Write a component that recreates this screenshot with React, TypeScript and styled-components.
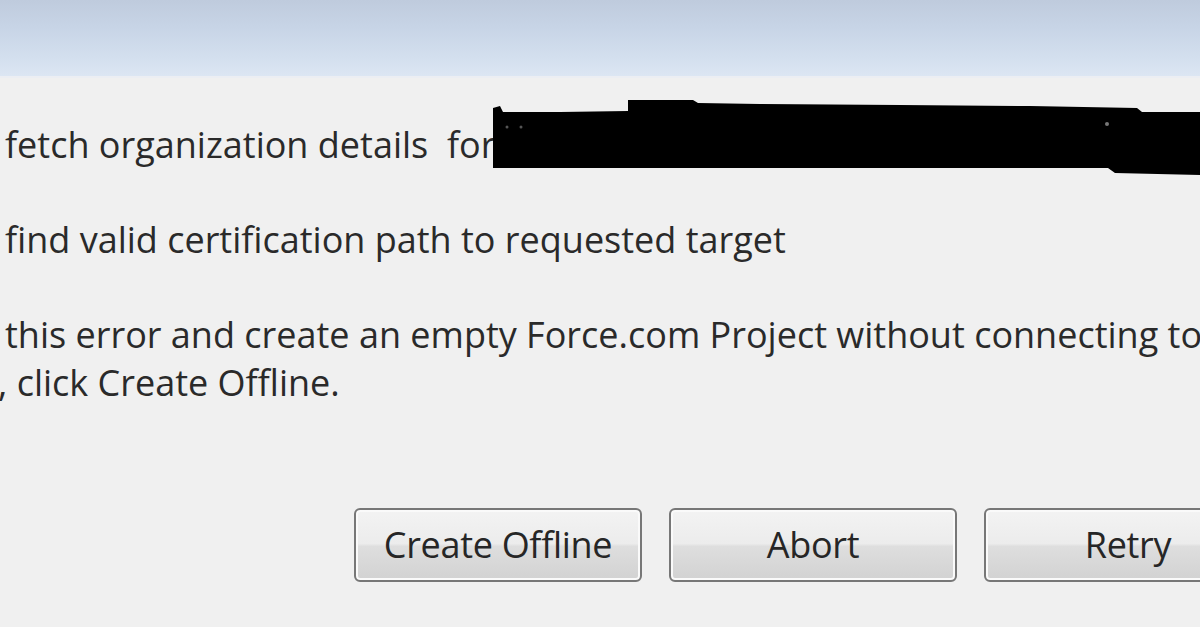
import styled, { createGlobalStyle } from "styled-components";

const GlobalStyle = createGlobalStyle`
  html, body {
    margin: 0;
    padding: 0;
    background: #f0f0f0;
  }
  body {
    font-family: "Open Sans", "Noto Sans", "DejaVu Sans", sans-serif;
  }
`;

const Dialog = styled.div`
  position: relative;
  width: 1200px;
  height: 627px;
  overflow: hidden;
  background: #f0f0f0;
`;

const TitleBar = styled.div`
  height: 76px;
  background: linear-gradient(to bottom, #bfcbdd 0%, #c7d4e6 35%, #d3dfee 75%, #dce6f3 100%);
  border-bottom: 2px solid #eceef3;
`;

const Body = styled.div`
  padding: 43px 0 0 5px;
  color: #2a2a2a;
  font-size: 36px;
  line-height: 47.5px;
  white-space: nowrap;
`;

const Paragraph = styled.p`
  margin: 0 0 47.5px 0;
`;

const LastParagraph = styled.p`
  margin: 0;
`;

const ContinuedLine = styled.span`
  display: inline-block;
  margin-left: -7px;
`;

const ButtonRow = styled.div`
  display: flex;
  gap: 27px;
  padding: 102px 0 0 354px;
`;

const Button = styled.div`
  flex: 0 0 auto;
  box-sizing: border-box;
  width: 288px;
  height: 74px;
  display: flex;
  align-items: center;
  justify-content: center;
  border: 2px solid #777777;
  border-radius: 6px;
  box-shadow: inset 0 0 0 2px #fafafa;
  background: linear-gradient(to bottom, #f3f3f3 0%, #ececec 48%, #dedede 52%, #d2d2d2 100%);
  color: #262626;
  font-size: 36px;
  letter-spacing: -0.3px;
  padding-bottom: 2px;
`;

const Redaction = styled.svg`
  position: absolute;
  left: 0;
  top: 0;
`;

const App = () => {
  return (
    <Dialog>
      <GlobalStyle />
      <TitleBar />
      <Body>
        <Paragraph>fetch organization details&nbsp; for</Paragraph>
        <Paragraph>find valid certification path to requested target</Paragraph>
        <LastParagraph>
          this error and create an empty Force.com Project without connecting to
          <br />
          <ContinuedLine>, click Create Offline.</ContinuedLine>
        </LastParagraph>
      </Body>
      <ButtonRow>
        <Button>Create Offline</Button>
        <Button>Abort</Button>
        <Button>Retry</Button>
      </ButtonRow>
      <Redaction width="1200" height="200" viewBox="0 0 1200 200">
        <polygon
          fill="#000"
          points="493,108 500,106 503,112 560,112 628,111 628,100 693,100 698,103 760,104 900,105 1030,106 1137,108 1142,112 1200,112 1200,175 1115,173 1108,168 493,168"
        />
        <circle cx="507" cy="127" r="1.5" fill="#555" />
        <circle cx="521" cy="127" r="1.5" fill="#555" />
        <circle cx="1107" cy="124" r="2" fill="#777" />
      </Redaction>
    </Dialog>
  );
};

export default App;
